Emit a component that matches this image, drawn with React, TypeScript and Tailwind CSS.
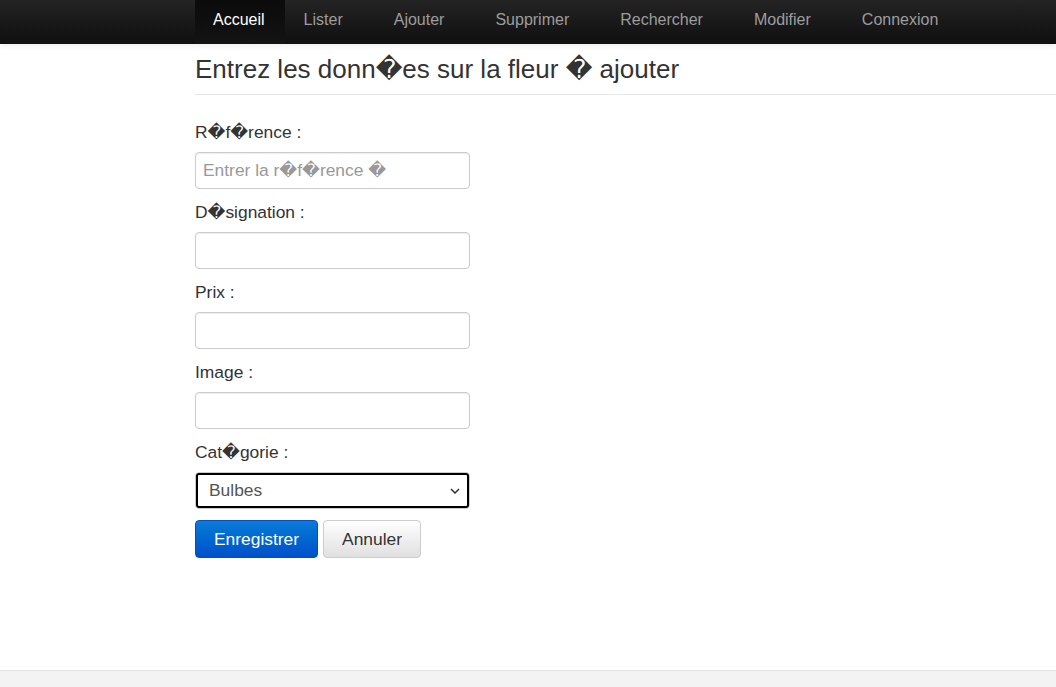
import React from "react";

const navItems = ["Lister", "Ajouter", "Supprimer", "Rechercher", "Modifier", "Connexion"];

// replacement glyph, rendered in DejaVu like the original page's fallback
function Bad() {
  return <span className="font-['DejaVu_Sans',sans-serif]">{"\uFFFD"}</span>;
}

const fields: { label: React.ReactNode; placeholder?: React.ReactNode; key: string }[] = [
  {
    key: "ref",
    label: (
      <>
        R<Bad />f<Bad />rence :
      </>
    ),
    placeholder: (
      <>
        Entrer la r<Bad />f<Bad />rence <Bad />
      </>
    ),
  },
  {
    key: "des",
    label: (
      <>
        D<Bad />signation :
      </>
    ),
  },
  { key: "prix", label: "Prix :" },
  { key: "img", label: "Image :" },
];

export default function App() {
  return (
    <div className="bg-white text-[#333] font-['Liberation_Sans',Arial,sans-serif]">
      <div className="min-h-[670px] flex flex-col">
        {/* navbar */}
        <nav className="h-[44px] bg-gradient-to-b from-[#242424] to-[#0f0f0f] shadow-[0_2px_6px_rgba(0,0,0,0.08)] pl-[195px] flex">
          <a className="h-[44px] pl-[18px] pr-[20px] pt-[8px] leading-[23px] text-[16px] text-white bg-gradient-to-b from-[#0b0b0b] to-[#131313]">
            Accueil
          </a>
          <ul className="flex gap-[51px] pl-[19px]">
            {navItems.map((item) => (
              <li key={item} className="h-[44px] pt-[8px] leading-[23px] text-[16px] text-[#9d9d9d]">
                {item}
              </li>
            ))}
          </ul>
        </nav>

        {/* content */}
        <main className="pl-[195px] pt-[12px]">
          <h3 className="text-[26px] leading-[26px] pb-[12px] border-b border-[#e6e6e6] text-[#333]">
            Entrez les donn<Bad />es sur la fleur <Bad /> ajouter
          </h3>

          <form className="mt-[26px] flex flex-col w-[275px] text-[17.4px]">
            {fields.map((f) => (
              <div key={f.key} className="mb-[12px]">
                <label className="block h-[23px] leading-[23px] mb-[8px]">{f.label}</label>
                <div className="relative">
                  <input className="block w-full h-[37px] px-[8px] text-[#555] border border-[#ccc] rounded-[4px] shadow-[inset_0_1px_1px_rgba(0,0,0,0.075)] outline-none" />
                  {f.placeholder && (
                    <span className="absolute left-[8px] top-0 h-[37px] leading-[37px] text-[#999] pointer-events-none">
                      {f.placeholder}
                    </span>
                  )}
                </div>
              </div>
            ))}
            <div className="mb-[11px]">
              <label className="block h-[23px] leading-[23px] mb-[8px]">
                Cat<Bad />gorie :
              </label>
              <div className="relative">
                <select className="appearance-none block w-full h-[37px] pl-[13px] text-[#555] bg-white border border-[#ccc] rounded-[4px] outline-2 outline-black outline-offset-[-3px]">
                  <option>Bulbes</option>
                </select>
                <svg className="absolute right-[10px] top-[16px] pointer-events-none" width="10" height="6" viewBox="0 0 10 6">
                  <path d="M1 1l4 4 4-4" fill="none" stroke="#333" strokeWidth="1.5" />
                </svg>
              </div>
            </div>
            <div className="flex gap-[5px]">
              <button
                type="button"
                className="h-[38px] px-[18px] text-white rounded-[4px] border border-[#0450b8] bg-gradient-to-b from-[#0b7bd8] to-[#0050c9]"
              >
                Enregistrer
              </button>
              <button
                type="button"
                className="h-[38px] px-[18px] text-[#333] rounded-[4px] border border-[#ccc] bg-gradient-to-b from-white to-[#e0e0e0]"
              >
                Annuler
              </button>
            </div>
          </form>
        </main>
      </div>

      <footer className="h-[60px] border-t border-[#e3e3e3] bg-[#f3f3f3]" />
    </div>
  );
}
